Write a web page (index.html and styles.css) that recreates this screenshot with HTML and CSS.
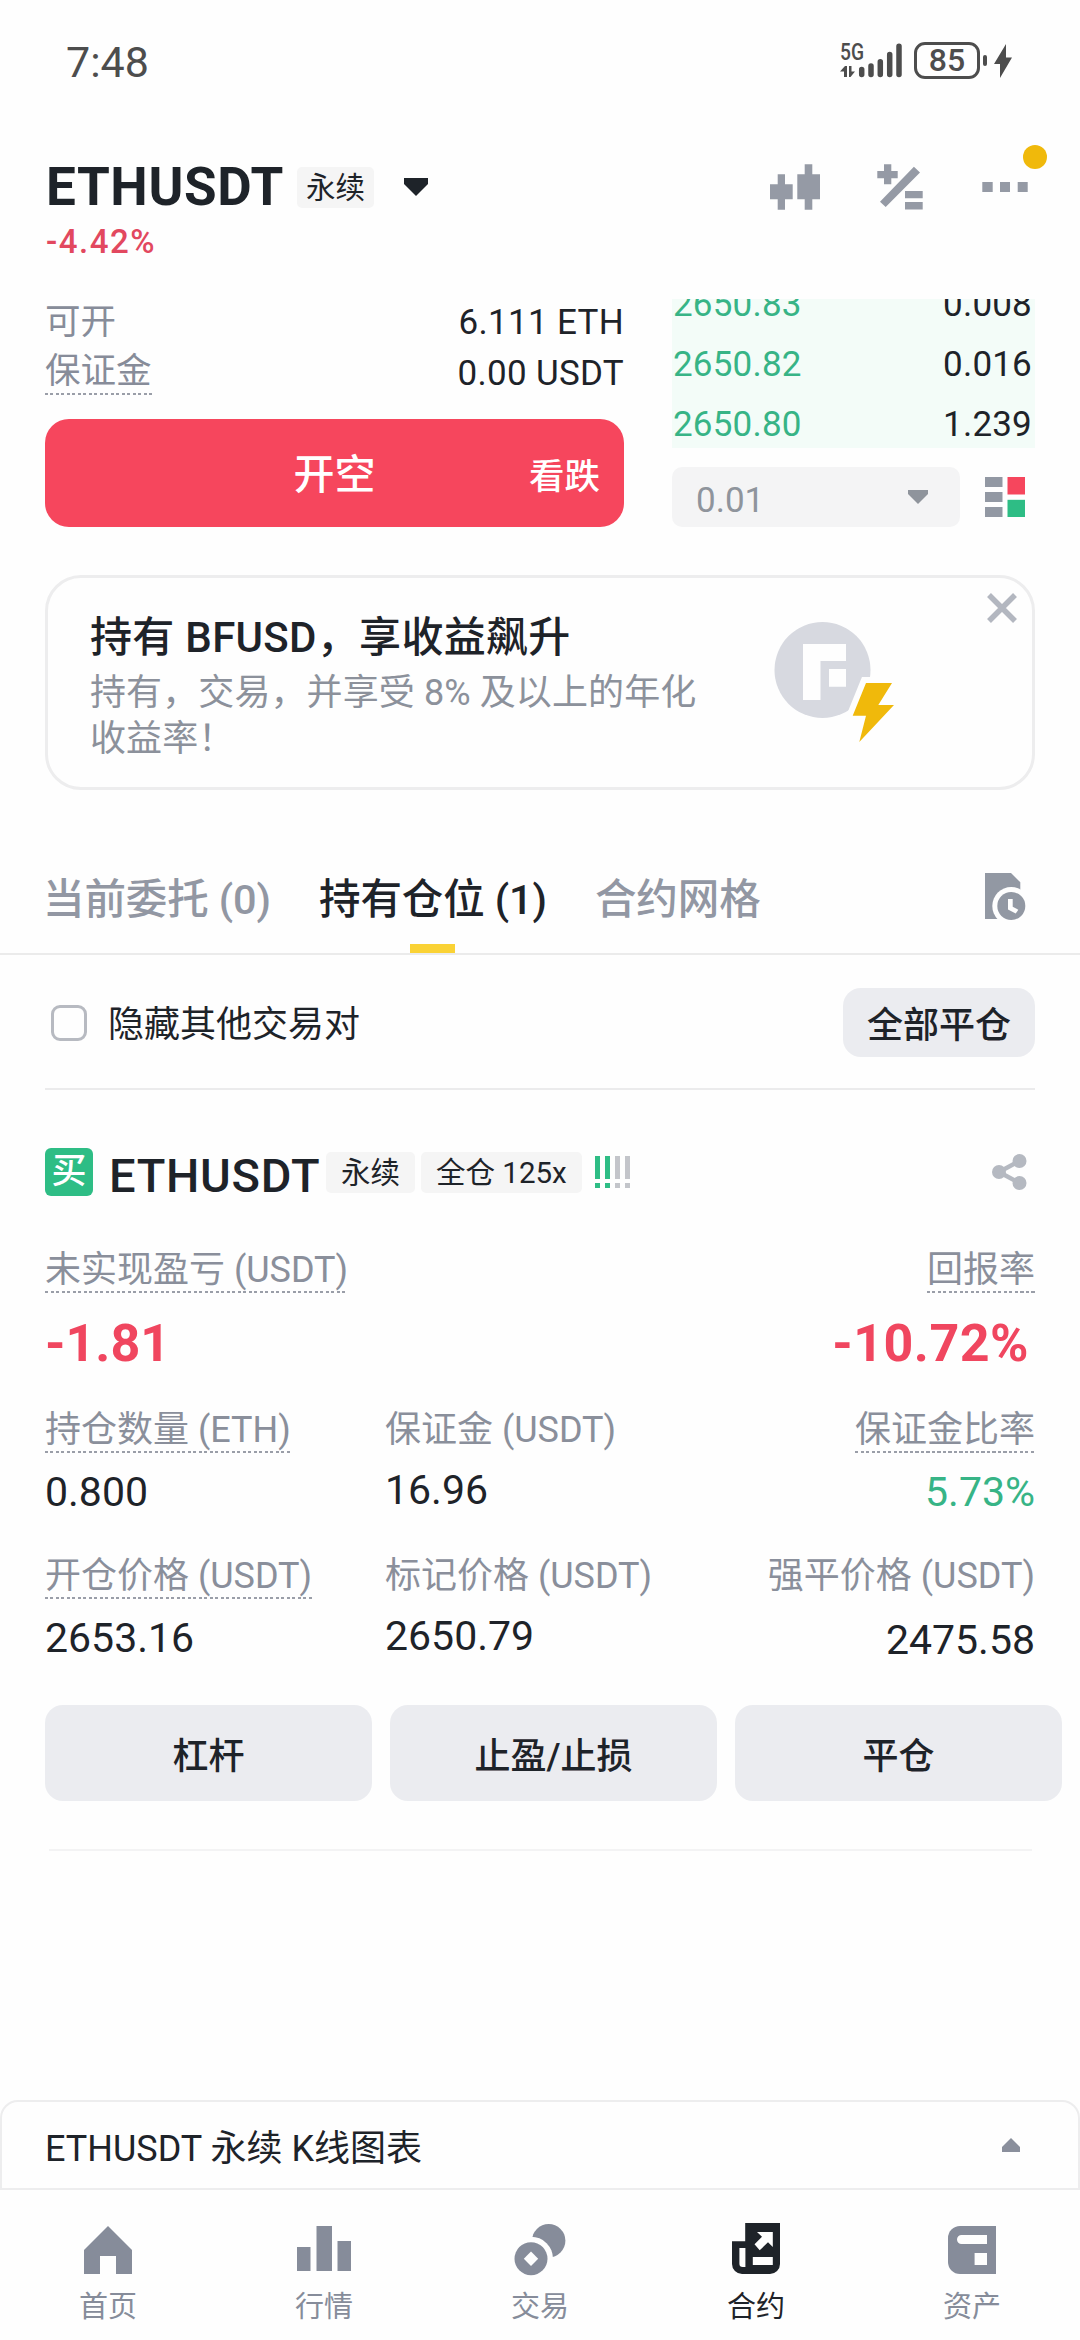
FILE: index.html
```html
<!DOCTYPE html>
<html lang="zh-CN">
<head>
<meta charset="utf-8">
<title>ETHUSDT 永续</title>
<link rel="stylesheet" href="styles.css">
</head>
<body>
<div class="screen">
  <div class="status">
    <span class="time">7:48</span>
    <div class="status-icons">
      <svg class="signal" width="64" height="46" viewBox="0 -4 64 46" fill="currentColor">
        <text x="0" y="18" font-size="23" font-weight="500" textLength="24" lengthAdjust="spacingAndGlyphs">5G</text>
        <path d="M0 29.500L5 24h2v11H4v-5.500zM9 24h2.500v5.500H15L10.500 35H9z"/>
        <path d="M21.700 27.500v5M31 24v8.500M40.300 19.700v12.800M49.700 12.500v20M59 4.300v28.200" fill="none" stroke="currentColor" stroke-width="5.500" stroke-linecap="round"/>
      </svg>
      <span class="battery">85</span>
      <span class="nub"></span>
      <svg width="18" height="34" viewBox="0 0 18 34" fill="currentColor"><path d="M12 0v13.500h6L6 34V20H0z"/></svg>
    </div>
  </div>

  <header class="header">
    <div class="heading">
      <div class="title-row">
        <h1 class="pair">ETHUSDT</h1>
        <span class="tag">永续</span>
        <svg class="caret" width="24" height="18" viewBox="0 0 24 18" fill="currentColor"><path d="M0 0h24v6L12 18 0 6z"/></svg>
      </div>
      <div class="change">-4.42%</div>
    </div>
    <div class="tools">
      <svg width="50" height="46" viewBox="0 0 50 46" fill="currentColor"><path d="M7.700 10.300H15v10h7.700v15H15v10.400H7.700V35.300H0v-15h7.700zM34.700.3h7.600v10H50v25h-7.700v10.400h-7.600V35.300h-7.400v-25h7.400z"/></svg>
      <svg width="46" height="46" viewBox="0 0 46 46" fill="currentColor"><path d="M7 .3h7.300V7h6.400v7.300h-6.400v6H7v-6H.3V7H7zM36.900 2.800L43 8.500 8.700 43 3 37.700zM28 27h17.700v7.200H28zM28 38h17.700v7.500H28z"/></svg>
      <span class="more">
        <svg width="46" height="46" viewBox="0 0 46 46" fill="currentColor"><path d="M.3 18h10.400v10H.3zM18 18h10v10H18zM35.700 18h10v10h-10z"/></svg>
      </span>
    </div>
  </header>

  <section class="trade">
    <div class="order">
      <div class="order-row"><span class="muted">可开</span><span>6.111 ETH</span></div>
      <div class="order-row second"><span class="muted dotted">保证金</span><span>0.00 USDT</span></div>
      <button class="short"><span class="short-main">开空</span><span class="short-side">看跌</span></button>
    </div>
    <div class="book">
      <div class="bids">
        <div class="bid"><span class="up">2650.83</span><span>0.008</span></div>
        <div class="bid"><span class="up">2650.82</span><span>0.016</span></div>
        <div class="bid"><span class="up">2650.80</span><span>1.239</span></div>
      </div>
      <div class="book-tools">
        <div class="select">0.01
          <svg width="20" height="14" viewBox="0 0 20 14" fill="currentColor"><path d="M0 0h20v4L10 14 0 4z"/></svg>
        </div>
        <svg class="depth" width="40" height="40" viewBox="0 0 40 40"><path fill="#9298a3" d="M0 0h17.500v10H0zM0 15h17.500v10H0zM0 30h17.500v10H0z"/><path fill="#f6465d" d="M22.500 0H40v17.500H22.500z"/><path fill="#2ebd85" d="M22.500 22.800H40V40H22.500z"/></svg>
      </div>
    </div>
  </section>

  <section class="banner">
    <div class="banner-text">
      <h2 class="banner-title">持有 BFUSD，享收益飙升</h2>
      <p class="banner-sub">持有，交易，并享受 8% 及以上的年化<br>收益率！</p>
    </div>
    <svg class="banner-art" width="124" height="124" viewBox="0 0 124 124">
      <circle cx="48.500" cy="49" r="48" fill="#d7d9e0"/>
      <path fill="#fefefe" d="M29 23h43v17H46.500v39H29zM55 48h17v17.700H55z"/>
      <path d="M92 62h26l-13.700 22H120l-34.700 37L92 94.700H78.700z" fill="#fefefe" stroke="#fefefe" stroke-width="12"/>
      <path d="M92 62h26l-13.700 22H120l-34.700 37L92 94.700H78.700z" fill="#f0b90b"/>
    </svg>
    <svg class="close" width="30" height="30" viewBox="0 0 30 30" fill="none" stroke="#b3b7c0" stroke-width="5.500"><path d="M2 2l26 26M28 2L2 28"/></svg>
  </section>

  <nav class="tabs">
    <span class="tab">当前委托 (0)</span>
    <span class="tab active">持有仓位 (1)</span>
    <span class="tab">合约网格</span>
    <svg class="history" width="42" height="48" viewBox="0 0 42 48">
      <path fill="#9298a3" d="M0 0h26l9.300 9.300V46H0z"/>
      <circle cx="26.300" cy="33" r="19" fill="#fefefe"/>
      <circle cx="26.300" cy="33" r="14" fill="#9298a3"/>
      <path fill="#fefefe" d="M23 26h4.700v7.700l5.600 3-2.600 3.900L23 36.500z"/>
    </svg>
  </nav>

  <main class="content">
    <div class="filter">
      <span class="check"></span>
      <span class="filter-label">隐藏其他交易对</span>
      <button class="close-all">全部平仓</button>
    </div>

    <div class="position-head">
      <span class="side">买</span>
      <span class="position-pair">ETHUSDT</span>
      <span class="tag wide">永续</span>
      <span class="tag wide">全仓 125x</span>
      <svg class="risk" width="35" height="32" viewBox="0 0 35 32"><path fill="#2ebd85" d="M0 0h5v23H0zM0 27h5v5H0zM10 0h5v23h-5zM10 27h5v5h-5z"/><path fill="#c3c5ca" d="M20 0h5v23h-5zM20 27h5v5h-5zM30 0h5v23h-5zM30 27h5v5h-5z"/></svg>
      <svg class="share" width="35" height="36" viewBox="0 0 35 36" fill="#b5b9c1"><path d="M27.500 7L7 18l20.500 11" fill="none" stroke="#b5b9c1" stroke-width="4.500"/><circle cx="7" cy="18" r="7"/><circle cx="27.500" cy="7" r="7"/><circle cx="27.500" cy="29" r="7"/></svg>
    </div>

    <div class="pnl">
      <div class="stat"><span class="label dotted">未实现盈亏 (USDT)</span><span class="big">-1.81</span></div>
      <div class="stat end"><span class="label dotted">回报率</span><span class="big roi">-10.72%</span></div>
    </div>
    <div class="stats">
      <div class="stat"><span class="label dotted">持仓数量 (ETH)</span><span class="value">0.800</span></div>
      <div class="stat"><span class="label">保证金 (USDT)</span><span class="value raised">16.96</span></div>
      <div class="stat end"><span class="label dotted">保证金比率</span><span class="value up">5.73%</span></div>
      <div class="stat"><span class="label dotted">开仓价格 (USDT)</span><span class="value">2653.16</span></div>
      <div class="stat"><span class="label">标记价格 (USDT)</span><span class="value raised">2650.79</span></div>
      <div class="stat end"><span class="label">强平价格 (USDT)</span><span class="value lowered">2475.58</span></div>
    </div>
    <div class="actions">
      <button class="action">杠杆</button>
      <button class="action">止盈/止损</button>
      <button class="action">平仓</button>
    </div>
    <div class="divider"></div>
  </main>

  <div class="chart-bar">
    <span>ETHUSDT 永续 K线图表</span>
    <svg width="18" height="14" viewBox="0 0 18 14" fill="#8a8f9c"><path d="M9 0l9 9v5H0V9z"/></svg>
  </div>

  <nav class="bottom">
    <a class="item">
      <svg width="60" height="54" viewBox="0 0 60 54" fill="currentColor"><path d="M30 4l24 24v24H38V34H22v18H6V28z"/></svg>
      首页
    </a>
    <a class="item">
      <svg width="60" height="54" viewBox="0 0 60 54" fill="currentColor"><path d="M3 25h13.500v24H3zM22.500 4H38v45H22.500zM43.500 19H57v30H43.500z"/></svg>
      行情
    </a>
    <a class="item">
      <svg width="60" height="54" viewBox="0 0 60 54" fill="currentColor"><circle cx="38.700" cy="18.700" r="16.700"/><circle cx="21" cy="36.700" r="22" fill="#fefefe"/><circle cx="21" cy="36.700" r="16.500"/><path fill="#fefefe" d="M21 29.500l7.200 7.200-7.200 7.200-7.200-7.200z"/></svg>
      交易
    </a>
    <a class="item current">
      <svg width="60" height="54" viewBox="0 0 60 54" fill="currentColor"><path d="M19.200 1H54v41a10 10 0 0 1-10 10H16A10 10 0 0 1 6 42V19.300h13.200z"/><path fill="#fefefe" d="M13.400 26h6v19h-2.700a3.300 3.300 0 0 1-3.300-3.300zM26.800 35h20v8h-20zM46.800 10v15L42 20.300l-8.300 8-5.200-6 7.500-7.600L31 10z"/></svg>
      合约
    </a>
    <a class="item">
      <svg width="60" height="54" viewBox="0 0 60 54" fill="currentColor"><path d="M18 4h36v48H18A12 12 0 0 1 6 40V16A12 12 0 0 1 18 4z"/><path fill="#fefefe" d="M19.500 13H45v9H19.500a4.500 4.500 0 0 1 0-9zM32.600 31H45v12H32.600z"/></svg>
      资产
    </a>
  </nav>
</div>
</body>
</html>
```
FILE: styles.css
```css
* { box-sizing: border-box; }

body {
  margin: 0;
  background: #fefefe;
  color: #1e2329;
  font-family: Roboto, "Noto Sans CJK SC", sans-serif;
  font-size: 36px;
}

svg { display: block; flex: none; }
h1, h2, p { margin: 0; }
button { border: 0; font: inherit; color: inherit; padding: 0; }

.screen {
  width: 1080px;
  height: 2340px;
  display: flex;
  flex-direction: column;
  overflow: hidden;
}

/* Status bar */
.status {
  height: 121px;
  padding: 0 68px 0 66px;
  display: flex;
  justify-content: space-between;
  align-items: center;
  color: #4d4d4d;
}
.time { font-size: 43px; line-height: 60px; padding-top: 3px; }
.status-icons { display: flex; align-items: center; }
.battery {
  width: 66px;
  height: 37px;
  margin-left: 10px;
  border: 3px solid;
  border-radius: 11px;
  font-size: 32px;
  font-weight: 500;
  line-height: 31px;
  text-align: center;
}
.nub { width: 4px; height: 11px; margin: 0 7px 0 3px; border-radius: 2px; background: currentColor; }

/* Pair header */
.header {
  height: 178px;
  padding: 36px 52px 0 46px;
  display: flex;
  justify-content: space-between;
}
.title-row { height: 60px; display: flex; align-items: center; }
.pair { font-size: 53px; font-weight: 700; line-height: 60px; letter-spacing: .6px; width: 251px; }
.tag {
  height: 41px;
  padding: 0 9px;
  border-radius: 5px;
  background: #f5f5f5;
  font-size: 29.5px;
  line-height: 42px;
}
.caret { margin-left: 30px; }
.change {
  margin-top: 7px;
  color: #e2485f;
  font-size: 33px;
  font-weight: 500;
  line-height: 36px;
  letter-spacing: 1.500px;
}
.tools { height: 60px; display: flex; align-items: center; color: #959aa5; }
.tools svg + svg { margin-left: 57px; }
.more { position: relative; margin-left: 59px; }
.more::after {
  content: "";
  position: absolute;
  left: 41px;
  top: -19px;
  width: 24px;
  height: 24px;
  border-radius: 50%;
  background: #f0b90b;
}

/* Order form and book */
.trade { padding: 0 45px; display: flex; gap: 48px; }
.order { width: 579px; }
.order-row { display: flex; justify-content: space-between; align-items: flex-start; line-height: 47px; height: 46px; font-size: 35px; letter-spacing: .3px; }
.order-row.second { height: 74px; line-height: 57px; }
.order-row.second .dotted { height: 50px; line-height: 53px; }
.muted { color: #878c99; font-size: 35.500px; letter-spacing: 0; }
.dotted {
  background: repeating-linear-gradient(90deg, #9a9ea8 0 3px, transparent 3px 5.500px) left bottom / 100% 2px no-repeat;
}
.short {
  width: 579px;
  height: 108px;
  border-radius: 24px;
  background: #f6465d;
  color: #fff;
  display: grid;
  grid-template-columns: 1fr auto 1fr;
  align-items: center;
  font-weight: 500;
}
.short-main { grid-column: 2; font-size: 41px; padding-bottom: 4px; }
.short-side { justify-self: end; margin-right: 24px; font-size: 35.500px; }
.book { flex: 1; }
.bids { height: 149px; overflow: hidden; background: #f3fcf8; padding: 0 3px 0 1px; }
.bid { height: 60px; line-height: 61px; font-size: 35px; letter-spacing: .2px; display: flex; justify-content: space-between; }
.bid:first-child { margin-top: -25px; }
.up { color: #37b486; }
.book-tools { margin-top: 19px; display: flex; align-items: center; justify-content: space-between; padding-right: 10px; }
.select {
  width: 288px;
  height: 60px;
  padding: 8px 32px 0 24px;
  border-radius: 10px;
  background: #f4f4f5;
  color: #8f949c;
  display: flex;
  justify-content: space-between;
  align-items: flex-start;
  font-size: 35px;
  line-height: 52px;
}
.select svg { margin-top: 15px; }

/* Promotion */
.banner {
  position: relative;
  height: 215px;
  margin: 48px 45px 0;
  padding: 34px 0 0 42px;
  border: 3px solid #ededee;
  border-radius: 36px;
}
.banner-title { font-size: 42px; font-weight: 500; line-height: 52px; letter-spacing: .3px; }
.banner-sub { margin-top: 6px; color: #8c919b; font-size: 36px; line-height: 46px; letter-spacing: .1px; }
.banner-art { position: absolute; left: 726px; top: 43px; }
.close { position: absolute; right: 15px; top: 15px; }

/* Tabs */
.tabs {
  height: 110px;
  margin-top: 55px;
  padding: 0 45px 0 43px;
  border-bottom: 2px solid #ebebeb;
  display: flex;
  gap: 48px;
  font-size: 41.500px;
  line-height: 109px;
  font-weight: 500;
  color: #9297a3;
}
.tab { position: relative; letter-spacing: -.1px; }
.active { color: #1e2329; }
.active::after {
  content: "";
  position: absolute;
  left: 50%;
  bottom: 0;
  width: 45px;
  height: 9px;
  margin-left: -23px;
  background: #fad235;
}
.history { margin: 28px 8px 0 auto; }

/* Positions */
.content { padding: 0 45px; }
.filter { height: 135px; border-bottom: 2px solid #ebebec; display: flex; align-items: center; padding: 2px 0 0 6px; }
.check { width: 36px; height: 36px; border: 3px solid #b7bac1; border-radius: 9px; margin-right: 21px; }
.filter-label { line-height: 50px; padding-top: 4px; }
.close-all { margin-left: auto; width: 192px; height: 69px; border-radius: 18px; background: #ebecf0; font-weight: 500; padding-bottom: 2px; }

.position-head { height: 48px; margin-top: 58px; display: flex; align-items: center; }
.side {
  width: 48px;
  height: 48px;
  margin-right: 16px;
  border-radius: 6px;
  background: #2ebd85;
  color: #fff;
  font-size: 35px;
  font-weight: 500;
  line-height: 48px;
  text-align: center;
}
.position-pair { font-size: 47px; font-weight: 500; line-height: 56px; letter-spacing: .7px; width: 217px; padding-top: 8px; }
.wide { padding: 0 15px; margin-right: 6px; line-height: 43px; }
.risk { margin-left: 7px; }
.share { margin: 0 8px 0 auto; }

.pnl { margin-top: 50px; display: flex; justify-content: space-between; }
.stat { display: flex; flex-direction: column; align-items: flex-start; }
.end { align-items: flex-end; }
.label { height: 47px; line-height: 48px; color: #8a8f9b; }
.big { margin-top: 20px; font-size: 52px; font-weight: 700; line-height: 61px; height: 60px; color: #f0465f; }
.roi { padding-right: 6px; letter-spacing: .5px; }
.stats { margin-top: 33px; display: grid; grid-template-columns: 340px 1fr auto; row-gap: 35px; }
.value { height: 51px; margin-top: 13px; font-size: 41px; line-height: 52px; }
.raised { line-height: 48px; }
.lowered { line-height: 56px; }

.actions { margin-top: 42px; display: flex; gap: 18px; }
.action { flex: none; width: 327px; height: 96px; border-radius: 18px; background: #ebecf0; font-weight: 500; padding: 0; }
.divider { height: 2px; margin: 48px 3px 0 4px; background: #f3f3f4; }

/* Collapsed chart */
.chart-bar {
  height: 90px;
  margin-top: auto;
  padding: 0 58px 0 43px;
  border: 2px solid #ededee;
  border-radius: 18px 18px 0 0;
  display: flex;
  align-items: center;
  justify-content: space-between;
  font-size: 36px;
}

/* Bottom navigation */
.bottom { height: 150px; display: grid; grid-template-columns: repeat(5, 1fr); color: #868c9a; }
.item { padding-top: 32px; display: flex; flex-direction: column; align-items: center; font-size: 29px; line-height: 42px; gap: 10px; }
.current { color: #1e2329; }
```
